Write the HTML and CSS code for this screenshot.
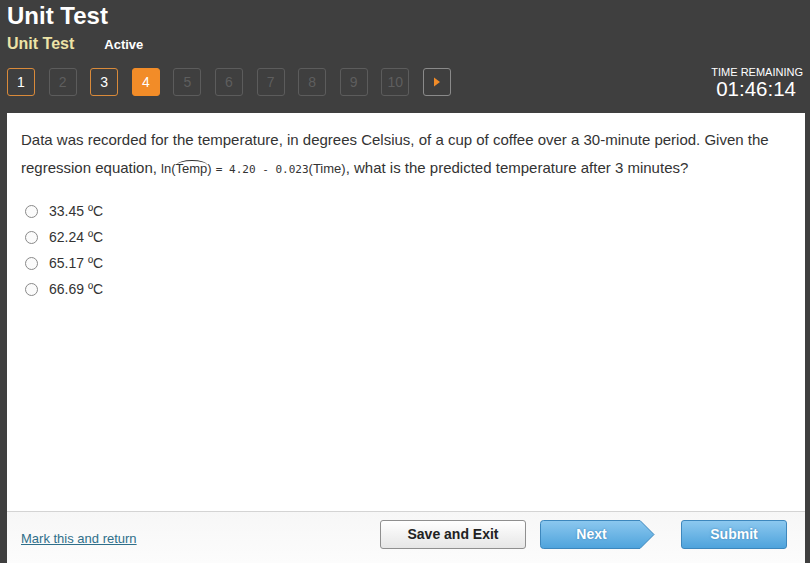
FILE: index.html
```html
<!DOCTYPE html>
<html>
<head>
<meta charset="utf-8">
<link rel="stylesheet" href="styles.css">
</head>
<body>
<div class="app">
  <header class="top">
    <h1 class="title">Unit Test</h1>
    <div class="sub">
      <span class="sub-name">Unit Test</span>
      <span class="sub-status">Active</span>
    </div>
    <div class="navrow">
      <nav class="steps">
        <span class="step done">1</span>
        <span class="step">2</span>
        <span class="step done">3</span>
        <span class="step current">4</span>
        <span class="step">5</span>
        <span class="step">6</span>
        <span class="step">7</span>
        <span class="step">8</span>
        <span class="step">9</span>
        <span class="step">10</span>
        <span class="step arrow"><svg width="8" height="10" viewBox="0 0 8 10"><path d="M1 0.5 L7 5 L1 9.5 Z" fill="#f28c28"/></svg></span>
      </nav>
      <div class="timer">
        <div class="timer-label">TIME REMAINING</div>
        <div class="timer-value">01:46:14</div>
      </div>
    </div>
  </header>
  <main class="panel">
    <section class="question">
      <p class="qtext">Data was recorded for the temperature, in degrees Celsius, of a cup of coffee over a 30-minute period. Given the regression equation, <span class="eq">ln(Temp)<span class="hat"></span></span> <span class="mono">= 4.20 - 0.023</span><span class="eq">(Time)</span>, what is the predicted temperature after 3 minutes?</p>
      <ul class="options">
        <li><span class="radio"></span>33.45 ºC</li>
        <li><span class="radio"></span>62.24 ºC</li>
        <li><span class="radio"></span>65.17 ºC</li>
        <li><span class="radio"></span>66.69 ºC</li>
      </ul>
    </section>
    <footer class="foot">
      <a class="mark" href="#">Mark this and return</a>
      <div class="buttons">
        <button class="btn save">Save and Exit</button>
        <button class="btn next">
          <svg class="next-shape" width="115" height="29" viewBox="0 0 115 29">
            <defs>
              <linearGradient id="g" x1="0" y1="0" x2="0" y2="1">
                <stop offset="0" stop-color="#8cc8ef"/>
                <stop offset="1" stop-color="#4ea3dc"/>
              </linearGradient>
            </defs>
            <path d="M3.5 0.5 H100 L114 14.5 L100 28.5 H3.5 Q0.5 28.5 0.5 25.5 V3.5 Q0.5 0.5 3.5 0.5 Z" fill="url(#g)" stroke="#3d87bd"/>
          </svg>
          <span class="next-label">Next</span>
        </button>
        <button class="btn submit">Submit</button>
      </div>
    </footer>
  </main>
</div>
</body>
</html>
```
FILE: styles.css
```css
* { box-sizing: border-box; }
html, body { margin: 0; padding: 0; }
body {
  width: 810px;
  height: 563px;
  overflow: hidden;
  background: #3f3f3f;
  font-family: "Liberation Sans", Arial, sans-serif;
}
.app {
  display: flex;
  flex-direction: column;
  height: 563px;
}
.top {
  padding: 2px 7px 0 7px;
  height: 113px;
}
.title {
  margin: 0;
  font-size: 24px;
  line-height: 28px;
  font-weight: bold;
  color: #ffffff;
}
.sub {
  display: flex;
  align-items: baseline;
  margin-top: 5px;
  height: 20px;
}
.sub-name {
  color: #ede3a6;
  font-weight: bold;
  font-size: 16px;
}
.sub-status {
  color: #ffffff;
  font-weight: bold;
  font-size: 13px;
  margin-left: 30px;
}
.navrow {
  display: flex;
  justify-content: space-between;
  align-items: flex-start;
  margin-top: 13px;
}
.steps {
  display: flex;
  gap: 13.6px;
}
.step {
  width: 28px;
  height: 28px;
  border: 1px solid #5c5c5c;
  border-radius: 3px;
  display: flex;
  align-items: center;
  justify-content: center;
  color: #5e5e5e;
  font-size: 14px;
}
.step.done {
  border-color: #d98a3a;
  color: #ffffff;
}
.step.current {
  background: #f28c28;
  border-color: #f28c28;
  color: #ffffff;
}
.step.arrow {
  border-color: #8a8a8a;
}
.timer {
  text-align: right;
  margin-top: -2px;
  margin-right: 0;
  color: #ffffff;
}
.timer-label {
  font-size: 11px;
  line-height: 12px;
}
.timer-value {
  font-size: 20.5px;
  line-height: 22px;
  margin-right: 7px;
}
.panel {
  flex: 1;
  margin: 0 5px 0 7px;
  background: #ffffff;
  display: flex;
  flex-direction: column;
}
.question {
  flex: 1;
  padding: 13px 14px 0 14px;
}
.qtext {
  margin: 0;
  font-size: 15px;
  line-height: 28px;
  color: #333333;
}
.eq {
  position: relative;
  font-size: 13px;
  line-height: 20px;
}
.mono {
  font-family: "DejaVu Sans Mono", "Liberation Mono", monospace;
  font-size: 11px;
  line-height: 20px;
}
.hat {
  position: absolute;
  left: 16px;
  width: 30px;
  top: -1px;
  height: 5px;
  border-top: 1px solid #333;
  border-radius: 50% 50% 0 0 / 100% 100% 0 0;
}
.options {
  list-style: none;
  margin: 16px 0 0 0;
  padding: 0 0 0 4px;
}
.options li {
  display: flex;
  align-items: center;
  height: 26px;
  font-size: 14px;
  color: #333333;
}
.radio {
  width: 13px;
  height: 13px;
  border: 1px solid #8a8a8a;
  border-radius: 50%;
  background: #fbfbfb;
  margin-right: 11px;
}
.foot {
  height: 52px;
  border-top: 1px solid #d4d4d4;
  background: linear-gradient(#f7f7f7, #fcfcfc);
  display: flex;
  align-items: center;
  justify-content: space-between;
  padding: 0 18px 0 14px;
}
.mark {
  color: #2f6f8a;
  font-size: 13px;
  text-decoration: underline;
  margin-top: 2px;
}
.buttons {
  display: flex;
  align-items: center;
  margin-top: -7px;
}
.btn {
  font-family: "Liberation Sans", Arial, sans-serif;
  font-weight: bold;
  font-size: 14px;
  height: 29px;
  border-radius: 3px;
  cursor: pointer;
}
.save {
  width: 146px;
  border: 1px solid #8f8f8f;
  background: linear-gradient(#ffffff, #e6e6e6);
  color: #222222;
}
.next {
  position: relative;
  width: 115px;
  margin-left: 14px;
  padding: 0;
  border: none;
  background: none;
}
.next-shape {
  display: block;
}
.next-label {
  position: absolute;
  left: 0;
  right: 12px;
  top: 0;
  line-height: 29px;
  text-align: center;
  color: #ffffff;
  text-shadow: 0 0 2px #3a7fb0;
}
.submit {
  width: 106px;
  margin-left: 26px;
  border: 1px solid #3d87bd;
  background: linear-gradient(#8cc8ef, #4ea3dc);
  color: #ffffff;
  text-shadow: 0 0 2px #3a7fb0;
}
```
